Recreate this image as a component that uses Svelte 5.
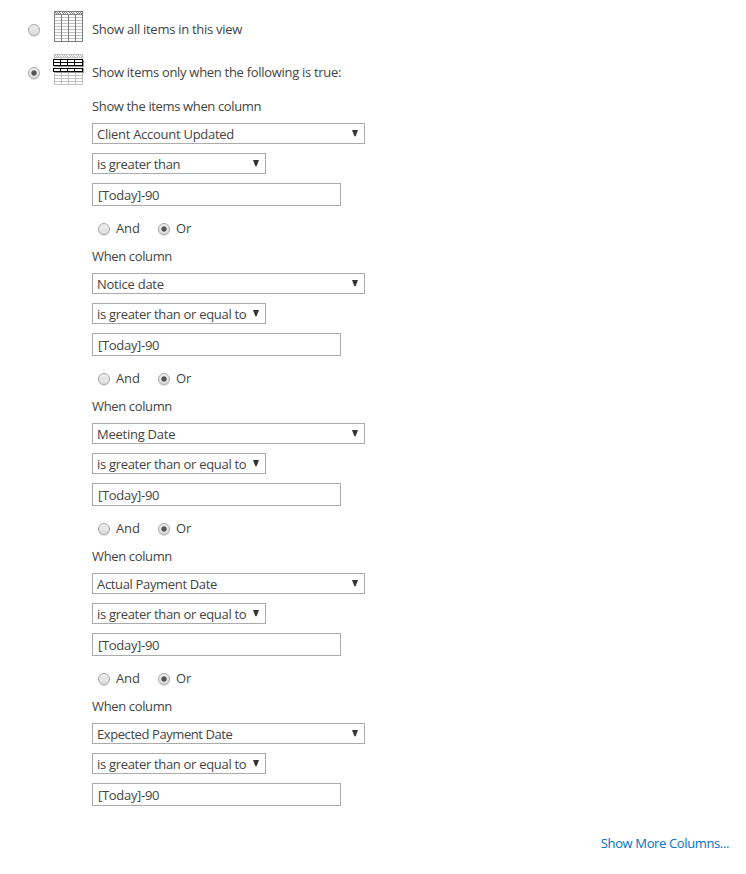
<script>
  const filters = [
    { column: 'Client Account Updated', cs: -0.27, operator: 'is greater than', os: -0.33 },
    { column: 'Notice date', cs: -0.25, operator: 'is greater than or equal to', os: -0.31 },
    { column: 'Meeting Date', cs: -0.25, operator: 'is greater than or equal to', os: -0.31 },
    { column: 'Actual Payment Date', cs: -0.34, operator: 'is greater than or equal to', os: -0.31 },
    { column: 'Expected Payment Date', cs: -0.42, operator: 'is greater than or equal to', os: -0.31 }
  ];
  const gridRows = [6, 9, 12, 15, 18, 21, 24, 27];
  const gridCols = [7, 14, 21];
  const checks = [1, 3, 5, 8, 10, 12, 15, 17, 19, 22, 24, 26];
</script>

{#snippet grid(color)}
  <path d="M.5 .5H28.5V30.5H.5Z" fill="#fff" stroke={color} />
  {#each gridRows as y}<rect x="1" {y} width="27" height="1" fill="#c0c0c0" />{/each}
  {#each gridCols as x}<rect {x} y="1" width="1" height="29" fill={color} />{/each}
  <rect x="1" y="1" width="27" height="2" fill="#fff" />
  <rect x="1" y="3" width="27" height="1" fill={color} />
  {#each checks as x}
    <path d="M{x} 1h1v1h-1zM{x + 1} 2h1v1h-1z" fill={color} />
  {/each}
{/snippet}

{#snippet arrow()}
  <svg class="arrow" width="6" height="7" viewBox="0 0 6 7"><path d="M0 0H6L3.6 6.3H2.4Z" fill="#333" /></svg>
{/snippet}

<main>
  <div class="choice">
    <i class="radio"></i>
    <svg class="icon" width="31" height="32" viewBox="-1 0 31 32" shape-rendering="crispEdges">{@render grid('#808080')}</svg>
    <span style:letter-spacing="-0.28px">Show all items in this view</span>
  </div>
  <div class="choice second">
    <i class="radio on"></i>
    <svg class="icon" width="31" height="32" viewBox="-1 0 31 32" shape-rendering="crispEdges">
      {@render grid('#c0c0c0')}
      <path d="M1 12h28v-6h1v7H1zM1 18h28v-4h1v5H1z" fill="#999" />
      <path d="M-1 5H29V12H-1Z M-1 14H29V18H-1Z" fill="#fff" />
      <path d="M-1 5H29V12H-1ZM0 6V8H6V6ZM7 6V8H13V6ZM14 6V8H20V6ZM21 6V8H28V6ZM0 9V11H6V9ZM7 9V11H13V9ZM14 9V11H20V9ZM21 9V11H28V9Z" fill="#000" fill-rule="evenodd" />
      <path d="M-1 14H29V18H-1ZM0 15V17H6V15ZM7 15V17H13V15ZM14 15V17H20V15ZM21 15V17H28V15Z" fill="#000" fill-rule="evenodd" />
    </svg>
    <span>Show items only when the following is true:</span>
  </div>

  <div class="filters">
    {#each filters as f, i}
      <section>
        <div class="label"><span>{i === 0 ? 'Show the items when column' : 'When column'}</span></div>
        <div class="select column"><span style:letter-spacing="{f.cs}px">{f.column}</span>{@render arrow()}</div>
        <div class="select operator"><span style:letter-spacing="{f.os}px">{f.operator}</span>{@render arrow()}</div>
        <div class="input"><span>[Today]-90</span></div>
        {#if i < filters.length - 1}
          <div class="join"><i class="radio"></i><span class="and">And</span><i class="radio on"></i><span>Or</span></div>
        {/if}
      </section>
    {/each}
  </div>
  <div class="more"><span>Show More Columns...</span></div>
</main>

<style>
  :global(body) { margin: 0; background: #fff; }
  main {
    box-sizing: border-box;
    width: 746px;
    height: 874px;
    padding: 11px 0 0 28px;
    font: 13px/18px "Open Sans", sans-serif;
    letter-spacing: -0.3px;
    color: #444;
    white-space: nowrap;
  }
  .choice { display: flex; height: 32px; align-items: center; }
  .choice.second { margin-top: 11px; }
  .choice span { position: relative; top: 2px; }
  .choice .radio { position: relative; top: 3px; }
  .icon { margin: 0 8px 0 13px; flex: none; display: block; }
  .radio {
    box-sizing: border-box;
    width: 12px;
    height: 12px;
    border: 1px solid #aaa;
    border-radius: 50%;
    background: linear-gradient(#eee, #ddd);
    box-shadow: 0 1px 1px #ddd;
    flex: none;
  }
  .radio.on { background: radial-gradient(circle, #555 0 2.2px, transparent 3.1px), linear-gradient(#eee, #ddd); }
  .filters { padding: 9px 0 0 64px; }
  section { height: 150px; }
  .label { height: 28px; line-height: 22px; letter-spacing: -0.36px; }
  .select, .input { box-sizing: border-box; display: flex; border: 1px solid #ababab; color: #444; }
  .select { height: 21px; padding: 0 6px 0 4px; line-height: 20px; justify-content: space-between; margin-bottom: 9px; }
  .column { width: 273px; }
  .operator { width: 174px; }
  .arrow { margin-top: 6px; flex: none; }
  .input { width: 249px; height: 23px; padding-left: 5px; line-height: 22px; }
  .join { display: flex; align-items: center; height: 18px; padding: 14px 0 0 6px; letter-spacing: -0.1px; }
  .join span { margin: -2px 0 0 6px; }
  .join .and { width: 42px; margin-right: -6px; box-sizing: content-box; }
  .join .and + .radio { margin-left: 6px; }
  .more { display: flex; justify-content: flex-end; padding-right: 17px; color: #0072c6; margin-top: -11px; letter-spacing: -0.37px; }
</style>
